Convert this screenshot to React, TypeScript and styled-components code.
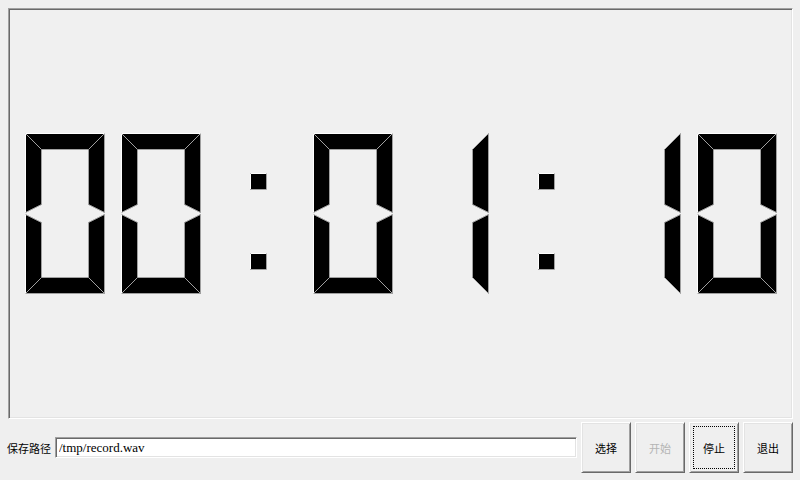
import React from 'react'
import styled, { createGlobalStyle } from 'styled-components'

const GlobalStyle = createGlobalStyle`
  html, body {
    margin: 0;
    padding: 0;
    background: #efefef;
  }
  #root {
    width: 800px;
    height: 480px;
  }
`

const Window = styled.div`
  box-sizing: border-box;
  width: 800px;
  height: 480px;
  padding: 8px 7px 7px 8px;
  display: flex;
  flex-direction: column;
  background: #efefef;
`

const LcdFrame = styled.div`
  box-sizing: border-box;
  width: 785px;
  height: 411px;
  border: 1px solid;
  border-color: #a0a0a0 #ffffff #ffffff #a0a0a0;
  box-shadow: inset 1px 1px 0 #696969, inset -1px -1px 0 #e3e3e3;
  background: #f0f0f0;
  display: flex;
  align-items: center;
  justify-content: center;
`

const LcdRow = styled.div`
  display: flex;
  gap: 16px;
  margin-left: 1px;
`

const BottomBar = styled.div`
  display: flex;
  align-items: center;
  height: 51px;
  margin-top: 3px;
  margin-left: -1px;
`

const PathLabel = styled.span`
  font-family: 'Noto Sans CJK SC', 'Noto Sans', sans-serif;
  font-size: 11px;
  color: #000;
  margin-right: 4px;
  white-space: nowrap;
`

const PathInput = styled.input`
  flex: 1;
  min-width: 0;
  box-sizing: border-box;
  height: 21px;
  margin: 0 4px 0 0;
  padding: 0 3px;
  border: 1px solid;
  border-color: #a0a0a0 #ffffff #ffffff #a0a0a0;
  box-shadow: inset 1px 1px 0 #696969, inset -1px -1px 0 #e3e3e3;
  background: #ffffff;
  font-family: 'Liberation Serif', serif;
  font-size: 13px;
  color: #000;
  outline: none;
`

const ButtonGroup = styled.div`
  display: flex;
  gap: 4px;
`

const PushButton = styled.button<{ $focused?: boolean }>`
  box-sizing: border-box;
  width: 50px;
  height: 51px;
  padding: 0;
  border: 1px solid;
  border-color: #ffffff #696969 #696969 #ffffff;
  box-shadow: inset 1px 1px 0 #e3e3e3, inset -1px -1px 0 #a0a0a0;
  background: #efefef;
  font-family: 'Noto Sans CJK SC', 'Noto Sans', sans-serif;
  font-size: 11px;
  color: #000;
  outline: ${(p) => (p.$focused ? '1px dotted #000' : 'none')};
  outline-offset: -5px;

  &:disabled {
    color: #b4b4b4;
  }
`

// 7-segment LCD drawing, Qt "Filled" look
const W = 79
const H = 160
const T = 16
const M = 80

const SEGMENTS: Record<string, number[][]> = {
  a: [[0, 0], [W, 0], [W - T, T], [T, T]],
  b: [[W, 0], [W, M - 1], [W - T, M - 9], [W - T, T]],
  c: [[W, M + 1], [W, H], [W - T, H - T], [W - T, M + 9]],
  d: [[T, H - T], [W - T, H - T], [W, H], [0, H]],
  e: [[0, M + 1], [T, M + 9], [T, H - T], [0, H]],
  f: [[0, 0], [T, T], [T, M - 9], [0, M - 1]],
  g: [[0, M], [T, M - 8], [W - T, M - 8], [W, M], [W - T, M + 8], [T, M + 8]],
}

const DIGIT_MAP: Record<string, string> = {
  '0': 'abcdef',
  '1': 'bc',
  '2': 'abged',
  '3': 'abgcd',
  '4': 'fgbc',
  '5': 'afgcd',
  '6': 'afgedc',
  '7': 'abc',
  '8': 'abcdefg',
  '9': 'abcdfg',
}

const pts = (p: number[][]) => p.map(([x, y]) => `${x + 0.5},${y + 0.5}`).join(' ')

const Digit = ({ value }: { value: string }) => {
  const segs = DIGIT_MAP[value] ?? ''
  return (
    <svg width={W + 1} height={H + 1} viewBox={`0 0 ${W + 1} ${H + 1}`}>
      {segs.split('').map((s) => (
        <polygon key={s} points={pts(SEGMENTS[s])} fill="#000" stroke="#a0a0a0" strokeWidth={1} />
      ))}
      {segs.includes('a') && <line x1={0.5} y1={0.5} x2={W + 0.5} y2={0.5} stroke="#fff" />}
      {segs.includes('f') && <line x1={0.5} y1={0.5} x2={0.5} y2={M - 0.5} stroke="#fff" />}
      {segs.includes('e') && <line x1={0.5} y1={M + 1.5} x2={0.5} y2={H + 0.5} stroke="#fff" />}
    </svg>
  )
}

const Colon = () => (
  <svg width={W + 1} height={H + 1} viewBox={`0 0 ${W + 1} ${H + 1}`}>
    {[40, 120].map((y) => (
      <g key={y}>
        <rect x={33} y={y} width={16} height={16} fill="#000" />
        <path d={`M33.5 ${y + 16} V${y + 0.5} H49`} stroke="#fff" fill="none" />
        <path d={`M49.5 ${y + 0.5} V${y + 16.5} H33`} stroke="#a0a0a0" fill="none" />
      </g>
    ))}
  </svg>
)

const Lcd = ({ text }: { text: string }) => (
  <LcdRow>
    {text.split('').map((ch, i) => (ch === ':' ? <Colon key={i} /> : <Digit key={i} value={ch} />))}
  </LcdRow>
)

export default function App() {
  return (
    <>
      <GlobalStyle />
      <Window>
        <LcdFrame>
          <Lcd text="00:01:10" />
        </LcdFrame>
        <BottomBar>
          <PathLabel>保存路径</PathLabel>
          <PathInput defaultValue="/tmp/record.wav" />
          <ButtonGroup>
            <PushButton>选择</PushButton>
            <PushButton disabled>开始</PushButton>
            <PushButton $focused>停止</PushButton>
            <PushButton>退出</PushButton>
          </ButtonGroup>
        </BottomBar>
      </Window>
    </>
  )
}
